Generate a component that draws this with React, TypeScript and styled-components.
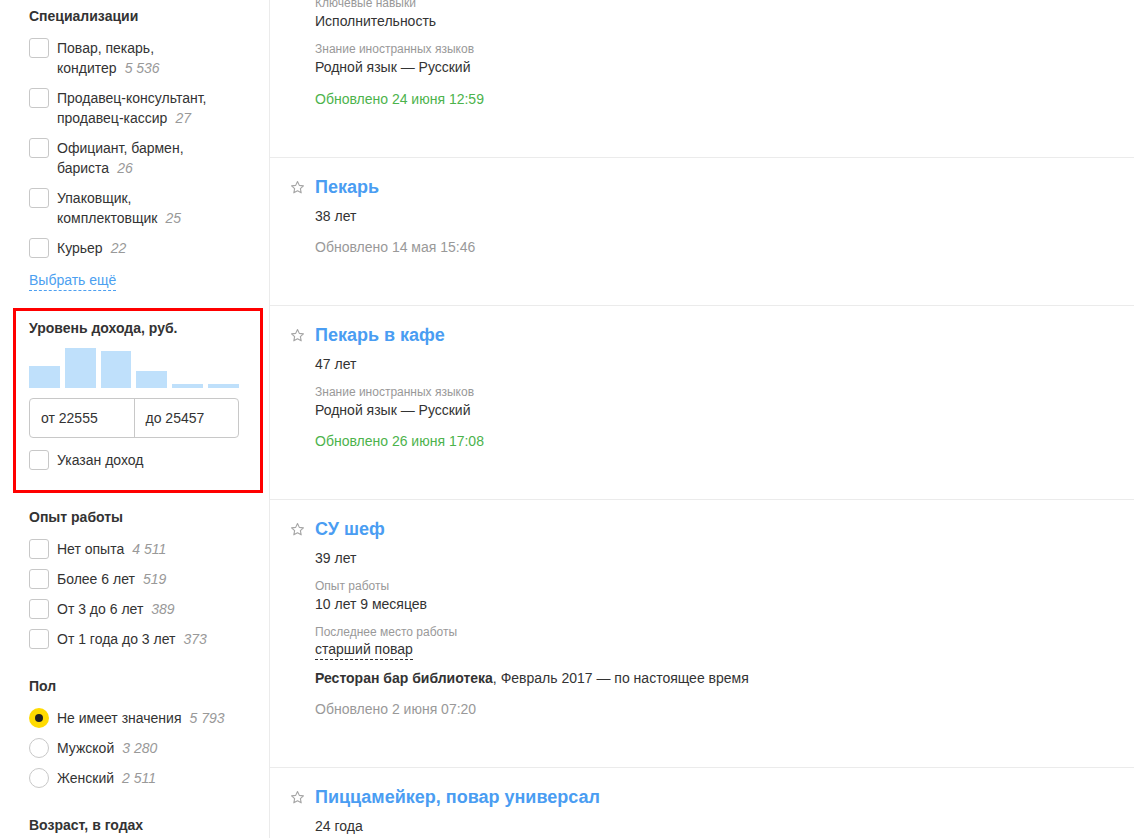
import React from "react";
import styled, { createGlobalStyle } from "styled-components";

const GlobalStyle = createGlobalStyle`
  html, body { margin: 0; padding: 0; background: #fff; }
  body {
    font-family: "Liberation Sans", Arial, sans-serif;
    font-size: 14px;
    color: #333;
    overflow: hidden;
  }
  * { box-sizing: border-box; }
`;

const Page = styled.div`
  display: flex;
  align-items: stretch;
  width: 1134px;
  height: 838px;
  overflow: hidden;
`;

const Sidebar = styled.aside`
  width: 270px;
  flex: 0 0 270px;
  border-right: 1px solid #ebebeb;
  padding: 6px 30px 0 29px;
`;

const Section = styled.section<{ $after?: number }>`
  margin-bottom: ${(p) => p.$after ?? 27}px;
`;

const Heading = styled.h3<{ $tight?: boolean }>`
  margin: 0 0 ${(p) => (p.$tight ? 0 : 12)}px;
  font-size: 14px;
  line-height: 20px;
  font-weight: bold;
  color: #333;
`;

const List = styled.div<{ $gap: number }>`
  display: flex;
  flex-direction: column;
  gap: ${(p) => p.$gap}px;
`;

const Option = styled.label`
  display: flex;
  align-items: flex-start;
  gap: 8px;
  cursor: pointer;
`;

const Box = styled.span`
  flex: 0 0 20px;
  width: 20px;
  height: 20px;
  border: 1px solid #c8c8c8;
  border-radius: 3px;
  background: #fff;
`;

const Radio = styled.span<{ $on?: boolean }>`
  flex: 0 0 20px;
  width: 20px;
  height: 20px;
  border-radius: 50%;
  border: ${(p) => (p.$on ? "none" : "1px solid #c8c8c8")};
  background: ${(p) => (p.$on ? "#ffdb00" : "#fff")};
  display: flex;
  align-items: center;
  justify-content: center;
  &::after {
    content: "";
    display: ${(p) => (p.$on ? "block" : "none")};
    width: 8px;
    height: 8px;
    border-radius: 50%;
    background: #222;
  }
`;

const OptionText = styled.span<{ $narrow?: boolean }>`
  display: block;
  font-size: 14px;
  line-height: 20px;
  color: #333;
  max-width: ${(p) => (p.$narrow ? "155px" : "none")};
`;

const Count = styled.span`
  margin-left: 8px;
  font-style: italic;
  font-size: 14px;
  line-height: 1;
  color: #999;
`;

const MoreLink = styled.a`
  display: inline-block;
  margin-top: 13px;
  font-size: 14px;
  line-height: 19px;
  color: #4c9ff0;
  text-decoration: none;
  border-bottom: 1px dashed #4c9ff0;
`;

const Highlight = styled.section`
  margin: 0 -24px 14px -16px;
  border: 3px solid #ff0000;
  padding: 7px 21px 20px 13px;
`;

const Bars = styled.div`
  display: flex;
  align-items: flex-end;
  gap: 5px;
  height: 41px;
  margin-top: 9px;
`;

const Bar = styled.div`
  flex: 1;
  background: #bfe0fb;
`;

const RangeRow = styled.div`
  display: flex;
  margin-top: 10px;
  height: 40px;
  border: 1px solid #c8c8c8;
  border-radius: 4px;
  overflow: hidden;
`;

const RangeInput = styled.div`
  flex: 1;
  display: flex;
  align-items: center;
  padding: 0 11px;
  font-size: 14px;
  color: #333;
  & + & {
    border-left: 1px solid #c8c8c8;
  }
`;

const CheckRow = styled.div`
  margin-top: 12px;
`;

const Main = styled.main`
  flex: 1;
  min-width: 0;
`;

const Card = styled.article<{ $clipped?: boolean }>`
  display: grid;
  grid-template-columns: 25px 1fr;
  padding: ${(p) => (p.$clipped ? "0" : "17px")} 20px 48px 20px;
  margin-top: ${(p) => (p.$clipped ? "-5px" : "0")};
  border-bottom: 1px solid #ebebeb;
`;

const StarCell = styled.div`
  padding-top: 5px;
  color: #a6a6a6;
`;

const Body = styled.div`
  grid-column: 2;
  display: flex;
  flex-direction: column;
  align-items: flex-start;
`;

const Title = styled.a`
  font-size: 18px;
  line-height: 24px;
  font-weight: bold;
  color: #4a9df2;
  text-decoration: none;
  margin-bottom: 7px;
`;

const Value = styled.div`
  font-size: 14px;
  line-height: 20px;
  color: #333;
`;

const Label = styled.div<{ $first?: boolean }>`
  margin-top: ${(p) => (p.$first ? 0 : 10)}px;
  font-size: 12px;
  line-height: 16px;
  color: #999;
`;

const Dashed = styled.span`
  font-size: 14px;
  line-height: 19px;
  color: #333;
  border-bottom: 1px dashed #333;
`;

const Company = styled.div`
  margin-top: 8px;
  font-size: 14px;
  line-height: 20px;
  color: #333;
  b { font-weight: bold; }
`;

const Updated = styled.div<{ $fresh?: boolean; $gap?: number }>`
  margin-top: ${(p) => p.$gap ?? 11}px;
  font-size: 14px;
  line-height: 20px;
  color: ${(p) => (p.$fresh ? "#4cb34c" : "#999")};
`;

const Star = () => (
  <svg width="15" height="15" viewBox="0 0 24 24" fill="none" stroke="currentColor" strokeWidth="1.8" strokeLinejoin="round">
    <polygon points="12,2.5 14.9,8.6 21.5,9.4 16.6,13.9 17.9,20.5 12,17.2 6.1,20.5 7.4,13.9 2.5,9.4 9.1,8.6" />
  </svg>
);

const specs = [
  { t: "Повар, пекарь, кондитер", c: "5 536" },
  { t: "Продавец-консультант, продавец-кассир", c: "27" },
  { t: "Официант, бармен, бариста", c: "26" },
  { t: "Упаковщик, комплектовщик", c: "25" },
  { t: "Курьер", c: "22" },
];

const experience = [
  { t: "Нет опыта", c: "4 511" },
  { t: "Более 6 лет", c: "519" },
  { t: "От 3 до 6 лет", c: "389" },
  { t: "От 1 года до 3 лет", c: "373" },
];

const genders = [
  { t: "Не имеет значения", c: "5 793", on: true },
  { t: "Мужской", c: "3 280" },
  { t: "Женский", c: "2 511" },
];

const bars = [22, 40, 37, 17, 4, 4];

export default function App() {
  return (
    <>
      <GlobalStyle />
      <Page>
        <Sidebar>
          <Section $after={17}>
            <Heading>Специализации</Heading>
            <List $gap={10}>
              {specs.map((s) => (
                <Option key={s.t}>
                  <Box />
                  <OptionText $narrow>
                    {s.t}
                    <Count>{s.c}</Count>
                  </OptionText>
                </Option>
              ))}
            </List>
            <MoreLink href="#">Выбрать ещё</MoreLink>
          </Section>

          <Highlight>
            <Heading $tight>Уровень дохода, руб.</Heading>
            <Bars>
              {bars.map((h, i) => (
                <Bar key={i} style={{ height: h }} />
              ))}
            </Bars>
            <RangeRow>
              <RangeInput>от 22555</RangeInput>
              <RangeInput>до 25457</RangeInput>
            </RangeRow>
            <CheckRow>
              <Option>
                <Box />
                <OptionText>Указан доход</OptionText>
              </Option>
            </CheckRow>
          </Highlight>

          <Section>
            <Heading>Опыт работы</Heading>
            <List $gap={10}>
              {experience.map((s) => (
                <Option key={s.t}>
                  <Box />
                  <OptionText>
                    {s.t}
                    <Count>{s.c}</Count>
                  </OptionText>
                </Option>
              ))}
            </List>
          </Section>

          <Section>
            <Heading>Пол</Heading>
            <List $gap={10}>
              {genders.map((s) => (
                <Option key={s.t}>
                  <Radio $on={s.on} />
                  <OptionText>
                    {s.t}
                    <Count>{s.c}</Count>
                  </OptionText>
                </Option>
              ))}
            </List>
          </Section>

          <Section>
            <Heading>Возраст, в годах</Heading>
          </Section>
        </Sidebar>

        <Main>
          <Card $clipped>
            <Body>
              <Label $first>Ключевые навыки</Label>
              <Value>Исполнительность</Value>
              <Label>Знание иностранных языков</Label>
              <Value>Родной язык — Русский</Value>
              <Updated $fresh $gap={12}>Обновлено 24 июня 12:59</Updated>
            </Body>
          </Card>

          <Card>
            <StarCell><Star /></StarCell>
            <Body>
              <Title href="#">Пекарь</Title>
              <Value>38 лет</Value>
              <Updated>Обновлено 14 мая 15:46</Updated>
            </Body>
          </Card>

          <Card>
            <StarCell><Star /></StarCell>
            <Body>
              <Title href="#">Пекарь в кафе</Title>
              <Value>47 лет</Value>
              <Label>Знание иностранных языков</Label>
              <Value>Родной язык — Русский</Value>
              <Updated $fresh>Обновлено 26 июня 17:08</Updated>
            </Body>
          </Card>

          <Card>
            <StarCell><Star /></StarCell>
            <Body>
              <Title href="#">СУ шеф</Title>
              <Value>39 лет</Value>
              <Label>Опыт работы</Label>
              <Value>10 лет 9 месяцев</Value>
              <Label>Последнее место работы</Label>
              <Dashed>старший повар</Dashed>
              <Company>
                <b>Ресторан бар библиотека</b>, Февраль 2017 — по настоящее время
              </Company>
              <Updated>Обновлено 2 июня 07:20</Updated>
            </Body>
          </Card>

          <Card>
            <StarCell><Star /></StarCell>
            <Body>
              <Title href="#">Пиццамейкер, повар универсал</Title>
              <Value>24 года</Value>
            </Body>
          </Card>
        </Main>
      </Page>
    </>
  );
}
